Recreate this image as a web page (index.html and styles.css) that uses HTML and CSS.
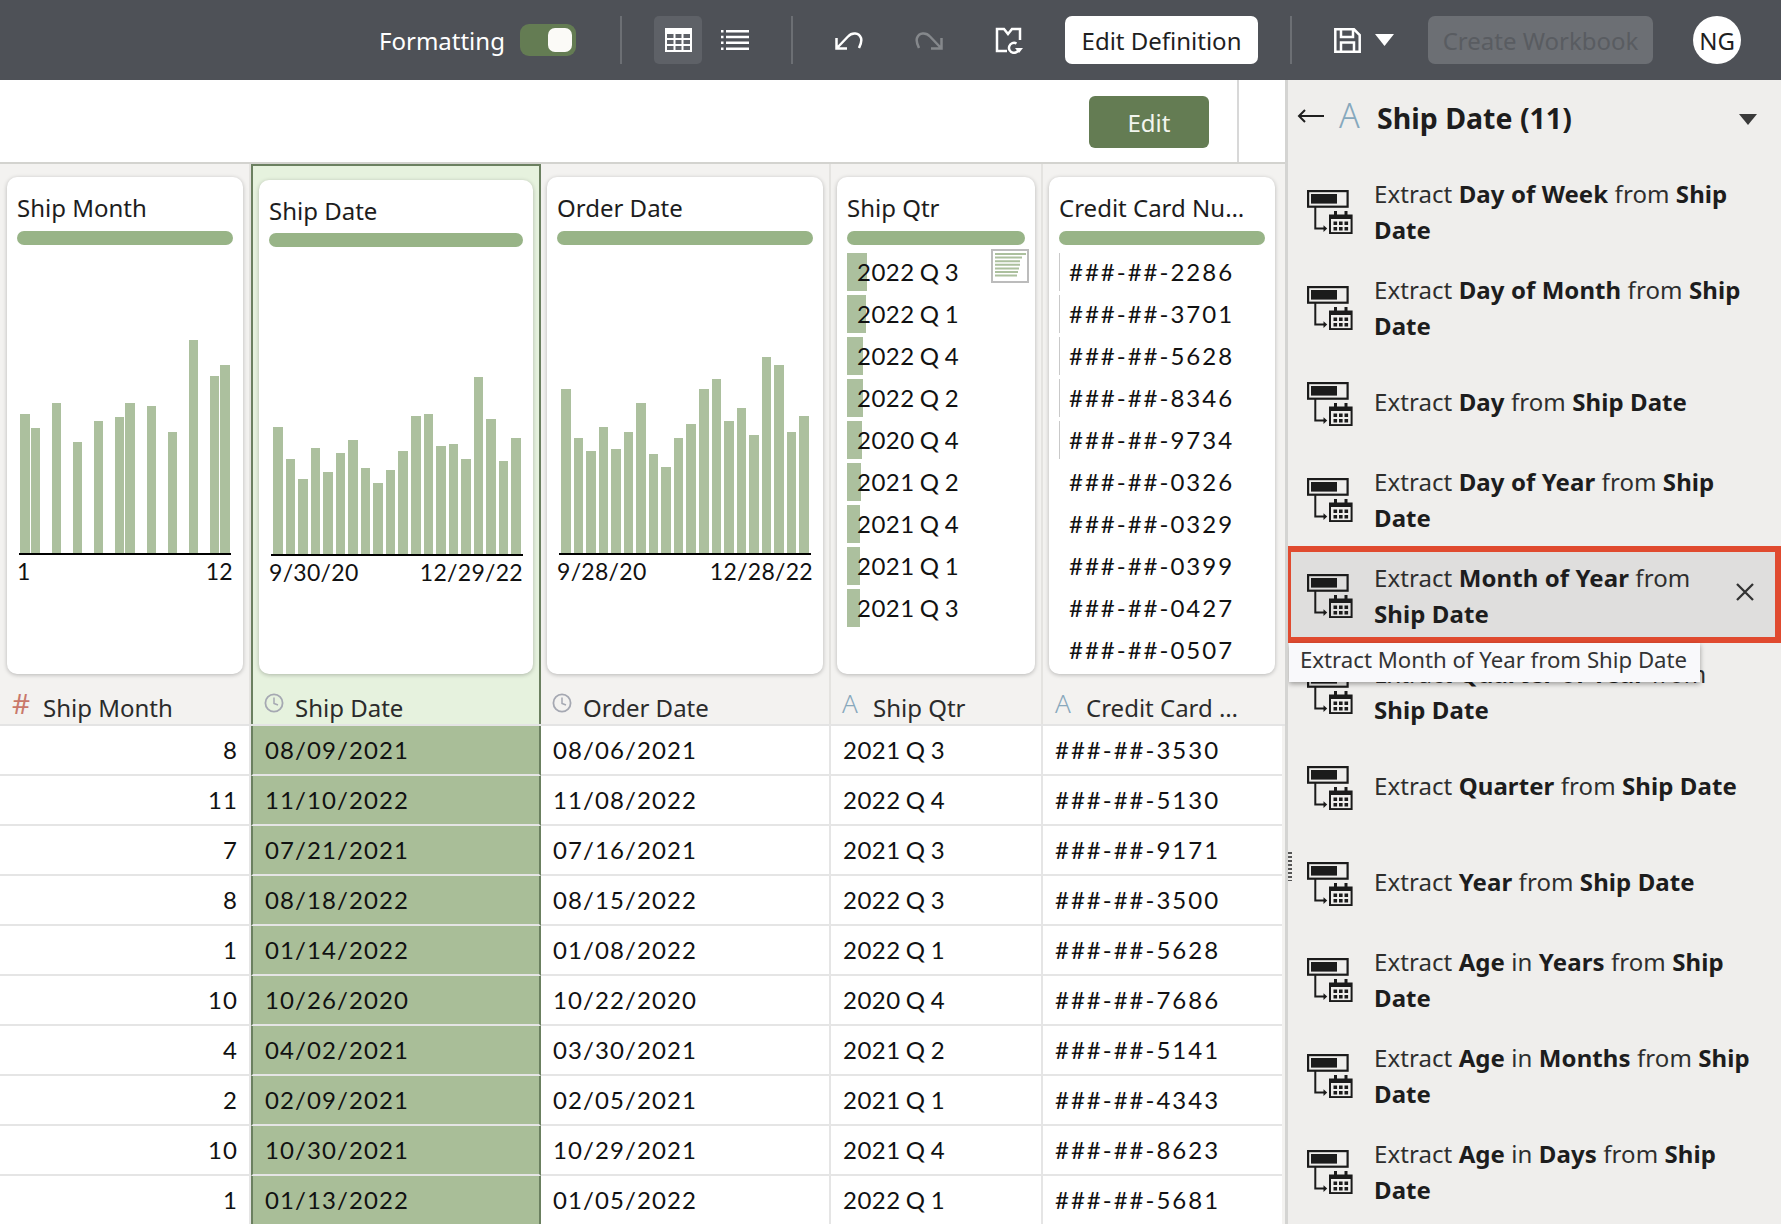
FILE: index.html
```html
<!DOCTYPE html>
<html lang="en">
<head>
<meta charset="utf-8">
<title>Ship Date</title>
<link rel="stylesheet" href="styles.css">
</head>
<body>
<svg class="defs" width="0" height="0" aria-hidden="true">
  <symbol id="extract" viewBox="0 0 46 44">
    <rect x="1.1" y="1.1" width="39.5" height="15.6" fill="none" stroke="#1b1b1b" stroke-width="2.2"/>
    <rect x="4" y="4" width="26" height="9.6" fill="#1b1b1b"/>
    <path d="M8.3 17V38.6H17" fill="none" stroke="#1b1b1b" stroke-width="2"/>
    <path d="M16.5 35.2 20.2 38.6 16.5 42Z" fill="#1b1b1b"/>
    <rect x="23" y="25.5" width="21.6" height="17.6" fill="none" stroke="#1b1b1b" stroke-width="2"/>
    <path d="M23 25h22v4H23zM27 21h3v5h-3zM37.500 21h3v5h-3z" fill="#1b1b1b"/>
    <path d="M26.500 31.500h3.600v3.400h-3.600zM32 31.500h3.600v3.400H32zM37.500 31.500h3.600v3.400h-3.600zM26.500 37h3.600v3.400h-3.600zM32 37h3.600v3.400H32zM37.500 37h3.600v3.400h-3.600z" fill="#1b1b1b"/>
  </symbol>
  <symbol id="clock" viewBox="0 0 20 20">
    <circle cx="10" cy="10" r="8.600" fill="none" stroke="#a5a8b2" stroke-width="1.800"/>
    <path d="M10 4.500V10.500L14 12" fill="none" stroke="#a5a8b2" stroke-width="1.500"/>
  </symbol>
</svg>

<header class="topbar">
  <span class="fmt-label">Formatting</span>
  <span class="toggle"><span class="knob"></span></span>
  <span class="sep sep-a"></span>
  <span class="view-btn">
    <svg width="27" height="24" viewBox="0 0 27 24"><path fill="#fff" fill-rule="evenodd" d="M0 0h27v24H0zM2 6v4h6.500V6zm8.500 0v4h6V6zm8 0v4H25V6zM2 12v4h6.500v-4zm8.500 0v4h6v-4zm8 0v4H25v-4zM2 18v4h6.500v-4zm8.500 0v4h6v-4zm8 0v4H25v-4z"/></svg>
  </span>
  <svg class="list-icon" width="28" height="20" viewBox="0 0 28 20"><path fill="#fff" d="M5 0h23v2.500H5zM5 5.800h23v2.500H5zM5 11.600h23v2.500H5zM5 17.400h23v2.500H5zM0 0h2.500v2.500H0zM0 5.800h2.500v2.500H0zM0 11.600h2.500v2.500H0zM0 17.400h2.500v2.500H0z"/></svg>
  <span class="sep sep-b"></span>
  <svg class="undo" width="28" height="19" viewBox="0 0 28 19"><path fill="none" stroke="#fff" stroke-width="2.500" d="M2 17 13 5.500C17 1 24 1.500 26 7 27 10 26 13 24 17M1.500 7V17.500H12"/></svg>
  <svg class="redo" width="28" height="19" viewBox="0 0 28 19"><path fill="none" stroke="#85888c" stroke-width="2.500" d="M26 17 15 5.500C11 1 4 1.500 2 7 1 10 2 13 4 17M26.500 7V17.500H16"/></svg>
  <svg class="book" width="28" height="27" viewBox="0 0 28 27"><path fill="none" stroke="#fff" stroke-width="2.500" d="M12 24H2V2H9L13 7 17 2H25V13"/><path fill="none" stroke="#fff" stroke-width="2.500" d="M24 21A5 5 0 1 1 21.500 16.500"/><path fill="#fff" d="M20 21h8l-4 5z"/></svg>
  <button class="edit-def" type="button">Edit Definition</button>
  <span class="sep sep-c"></span>
  <svg class="save" width="27" height="25" viewBox="0 0 27 25"><path fill="none" stroke="#fff" stroke-width="2.500" d="M1.300 1.300H20L25.700 7V23.700H1.300ZM7 1.300V9H19V1.300M7 23.700V14.500H20V23.700"/></svg>
  <svg class="save-arrow" width="19" height="12" viewBox="0 0 19 12"><path fill="#fff" d="M0 0h19l-9.500 12z"/></svg>
  <button class="create" type="button" disabled>Create Workbook</button>
  <span class="avatar">NG</span>
</header>

<div class="content">
  <main class="main">
    <div class="subhead">
      <button class="edit" type="button">Edit</button>
      <span class="subhead-rule"></span>
    </div>

    <div class="grid heads">
      <section class="head head-month">
        <div class="card">
          <h3 class="title">Ship Month</h3>
          <div class="pill"></div>
          <div class="chart chart-month">
            <i style="height:139px"></i><i style="height:125px"></i><b></b><i style="height:150px"></i><b></b><i style="height:111px"></i><b></b><i style="height:132px"></i><b></b><i style="height:136px"></i><i style="height:150px"></i><b></b><i style="height:147px"></i><b></b><i style="height:121px"></i><b></b><i style="height:213px"></i><b></b><i style="height:177px"></i><i style="height:188px"></i>
          </div>
          <div class="axis"><span>1</span><span>12</span></div>
        </div>
        <div class="label"><span class="type type-num">#</span>Ship Month</div>
      </section>

      <section class="head head-selected">
        <div class="card">
          <h3 class="title">Ship Date</h3>
          <div class="pill"></div>
          <div class="chart chart-date">
            <i style="height:127px"></i><i style="height:95px"></i><i style="height:75px"></i><i style="height:106px"></i><i style="height:82px"></i><i style="height:101px"></i><i style="height:114px"></i><i style="height:86px"></i><i style="height:71px"></i><i style="height:84px"></i><i style="height:103px"></i><i style="height:138px"></i><i style="height:140px"></i><i style="height:108px"></i><i style="height:110px"></i><i style="height:95px"></i><i style="height:177px"></i><i style="height:135px"></i><i style="height:93px"></i><i style="height:116px"></i>
          </div>
          <div class="axis"><span>9/30/20</span><span>12/29/22</span></div>
        </div>
        <div class="label"><span class="type"><svg width="20" height="20"><use href="#clock"/></svg></span>Ship Date</div>
      </section>

      <section class="head head-order">
        <div class="card">
          <h3 class="title">Order Date</h3>
          <div class="pill"></div>
          <div class="chart chart-order">
            <i style="height:164px"></i><i style="height:115px"></i><i style="height:102px"></i><i style="height:126px"></i><i style="height:104px"></i><i style="height:121px"></i><i style="height:150px"></i><i style="height:99px"></i><i style="height:86px"></i><i style="height:115px"></i><i style="height:129px"></i><i style="height:164px"></i><i style="height:174px"></i><i style="height:132px"></i><i style="height:145px"></i><i style="height:118px"></i><i style="height:196px"></i><i style="height:188px"></i><i style="height:121px"></i><i style="height:137px"></i>
          </div>
          <div class="axis"><span>9/28/20</span><span>12/28/22</span></div>
        </div>
        <div class="label"><span class="type"><svg width="20" height="20"><use href="#clock"/></svg></span>Order Date</div>
      </section>

      <section class="head head-qtr">
        <div class="card">
          <h3 class="title">Ship Qtr</h3>
          <div class="pill"></div>
          <svg class="mini" width="38" height="34" viewBox="0 0 38 34"><rect x="1" y="1" width="36" height="32" fill="#fff" stroke="#bcbcbc" stroke-width="2"/><path fill="#acc09e" d="M4 4h31v2H4zM4 7.600h27v2H4zM4 11.200h25v2H4zM4 14.800h25v2H4zM4 18.400h24v2H4zM4 22h23v2H4zM4 25.600h22v2H4z"/></svg>
          <ul class="values">
            <li class="value"><span class="value-bar" style="width:20px"></span>2022 Q 3</li>
            <li class="value"><span class="value-bar" style="width:19px"></span>2022 Q 1</li>
            <li class="value"><span class="value-bar" style="width:16px"></span>2022 Q 4</li>
            <li class="value"><span class="value-bar" style="width:16px"></span>2022 Q 2</li>
            <li class="value"><span class="value-bar" style="width:15px"></span>2020 Q 4</li>
            <li class="value"><span class="value-bar" style="width:14px"></span>2021 Q 2</li>
            <li class="value"><span class="value-bar" style="width:13px"></span>2021 Q 4</li>
            <li class="value"><span class="value-bar" style="width:13px"></span>2021 Q 1</li>
            <li class="value"><span class="value-bar" style="width:13px"></span>2021 Q 3</li>
          </ul>
        </div>
        <div class="label"><span class="type type-text">A</span>Ship Qtr</div>
      </section>

      <section class="head head-card">
        <div class="card">
          <h3 class="title">Credit Card Nu…</h3>
          <div class="pill"></div>
          <ul class="values">
            <li class="value value-ruled">###-##-2286</li>
            <li class="value value-ruled">###-##-3701</li>
            <li class="value value-ruled">###-##-5628</li>
            <li class="value value-ruled">###-##-8346</li>
            <li class="value value-ruled">###-##-9734</li>
            <li class="value value-plain">###-##-0326</li>
            <li class="value value-plain">###-##-0329</li>
            <li class="value value-plain">###-##-0399</li>
            <li class="value value-plain">###-##-0427</li>
            <li class="value value-plain">###-##-0507</li>
          </ul>
        </div>
        <div class="label"><span class="type type-text">A</span>Credit Card …</div>
      </section>
    </div>

    <div class="grid row"><div class="cell cell-num">8</div><div class="cell cell-sel">08/09/2021</div><div class="cell">08/06/2021</div><div class="cell cell-qtr">2021 Q 3</div><div class="cell cell-card">###-##-3530</div></div>
    <div class="grid row"><div class="cell cell-num">11</div><div class="cell cell-sel">11/10/2022</div><div class="cell">11/08/2022</div><div class="cell cell-qtr">2022 Q 4</div><div class="cell cell-card">###-##-5130</div></div>
    <div class="grid row"><div class="cell cell-num">7</div><div class="cell cell-sel">07/21/2021</div><div class="cell">07/16/2021</div><div class="cell cell-qtr">2021 Q 3</div><div class="cell cell-card">###-##-9171</div></div>
    <div class="grid row"><div class="cell cell-num">8</div><div class="cell cell-sel">08/18/2022</div><div class="cell">08/15/2022</div><div class="cell cell-qtr">2022 Q 3</div><div class="cell cell-card">###-##-3500</div></div>
    <div class="grid row"><div class="cell cell-num">1</div><div class="cell cell-sel">01/14/2022</div><div class="cell">01/08/2022</div><div class="cell cell-qtr">2022 Q 1</div><div class="cell cell-card">###-##-5628</div></div>
    <div class="grid row"><div class="cell cell-num">10</div><div class="cell cell-sel">10/26/2020</div><div class="cell">10/22/2020</div><div class="cell cell-qtr">2020 Q 4</div><div class="cell cell-card">###-##-7686</div></div>
    <div class="grid row"><div class="cell cell-num">4</div><div class="cell cell-sel">04/02/2021</div><div class="cell">03/30/2021</div><div class="cell cell-qtr">2021 Q 2</div><div class="cell cell-card">###-##-5141</div></div>
    <div class="grid row"><div class="cell cell-num">2</div><div class="cell cell-sel">02/09/2021</div><div class="cell">02/05/2021</div><div class="cell cell-qtr">2021 Q 1</div><div class="cell cell-card">###-##-4343</div></div>
    <div class="grid row"><div class="cell cell-num">10</div><div class="cell cell-sel">10/30/2021</div><div class="cell">10/29/2021</div><div class="cell cell-qtr">2021 Q 4</div><div class="cell cell-card">###-##-8623</div></div>
    <div class="grid row"><div class="cell cell-num">1</div><div class="cell cell-sel">01/13/2022</div><div class="cell">01/05/2022</div><div class="cell cell-qtr">2022 Q 1</div><div class="cell cell-card">###-##-5681</div></div>
  </main>

  <aside class="panel">
    <span class="handle"></span>
    <div class="panel-head">
      <svg class="back" width="27" height="14" viewBox="0 0 27 14"><path fill="none" stroke="#1f1f1f" stroke-width="2" d="M27 7H2M8 1 2 7l6 6"/></svg>
      <span class="panel-type">A</span>
      <h2 class="panel-title">Ship Date (11)</h2>
      <svg class="panel-caret" width="18" height="11" viewBox="0 0 18 11"><path fill="#3a3a3a" d="M0 0h18l-9 11z"/></svg>
    </div>
    <ul class="items">
      <li class="item"><svg class="item-icon" width="46" height="44"><use href="#extract"/></svg><p class="item-text">Extract <b>Day of Week</b> from <b>Ship</b> <b>Date</b></p></li>
      <li class="item"><svg class="item-icon" width="46" height="44"><use href="#extract"/></svg><p class="item-text">Extract <b>Day of Month</b> from <b>Ship</b> <b>Date</b></p></li>
      <li class="item"><svg class="item-icon" width="46" height="44"><use href="#extract"/></svg><p class="item-text item-single">Extract <b>Day</b> from <b>Ship Date</b></p></li>
      <li class="item"><svg class="item-icon" width="46" height="44"><use href="#extract"/></svg><p class="item-text">Extract <b>Day of Year</b> from <b>Ship</b> <b>Date</b></p></li>
      <li class="item item-active"><svg class="item-icon" width="46" height="44"><use href="#extract"/></svg><p class="item-text">Extract <b>Month of Year</b> from <b>Ship Date</b></p><svg class="item-close" width="18" height="18" viewBox="0 0 18 18"><path fill="none" stroke="#333" stroke-width="2.300" d="M1 1 17 17M17 1 1 17"/></svg></li>
      <li class="item"><svg class="item-icon" width="46" height="44"><use href="#extract"/></svg><p class="item-text">Extract <b>Quarter of Year</b> from <b>Ship Date</b></p></li>
      <li class="item"><svg class="item-icon" width="46" height="44"><use href="#extract"/></svg><p class="item-text item-single">Extract <b>Quarter</b> from <b>Ship Date</b></p></li>
      <li class="item"><svg class="item-icon" width="46" height="44"><use href="#extract"/></svg><p class="item-text item-single">Extract <b>Year</b> from <b>Ship Date</b></p></li>
      <li class="item"><svg class="item-icon" width="46" height="44"><use href="#extract"/></svg><p class="item-text">Extract <b>Age</b> in <b>Years</b> from <b>Ship</b> <b>Date</b></p></li>
      <li class="item"><svg class="item-icon" width="46" height="44"><use href="#extract"/></svg><p class="item-text">Extract <b>Age</b> in <b>Months</b> from <b>Ship</b> <b>Date</b></p></li>
      <li class="item"><svg class="item-icon" width="46" height="44"><use href="#extract"/></svg><p class="item-text">Extract <b>Age</b> in <b>Days</b> from <b>Ship</b> <b>Date</b></p></li>
    </ul>
    <div class="tooltip">Extract Month of Year from Ship Date</div>
  </aside>
</div>
</body>
</html>
```

FILE: styles.css
```css
* { box-sizing: border-box; }
html, body { margin: 0; height: 100%; }
body {
  width: 1781px;
  height: 1224px;
  overflow: hidden;
  background: #fff;
  color: #1d1d1d;
  font-family: "Noto Sans", sans-serif;
  font-size: 24px;
}
.defs { position: absolute; }
ul { list-style: none; margin: 0; padding: 0; }
h2, h3, p { margin: 0; font-weight: 400; }
button { font: inherit; border: 0; padding: 0; }

/* top bar */
.topbar {
  height: 80px;
  background: #4e5157;
  display: flex;
  align-items: center;
  padding-left: 379px;
  color: #fff;
}
.fmt-label { width: 125px; white-space: nowrap; }
.toggle {
  width: 56px; height: 32px; margin-left: 16px;
  background: #647c53; border-radius: 9px;
  display: flex; align-items: center; justify-content: flex-end; padding-right: 4px;
}
.knob { width: 24px; height: 24px; border-radius: 7px; background: #fbfaf7; }
.sep { width: 2px; height: 48px; background: #6c6f74; flex: none; }
.sep-a { margin-left: 44px; }
.view-btn {
  width: 48px; height: 48px; margin-left: 32px;
  background: #5e6167; border-radius: 5px;
  display: flex; align-items: center; justify-content: center;
}
.list-icon { margin-left: 19px; }
.sep-b { margin-left: 42px; }
.undo { margin-left: 42px; }
.redo { margin-left: 52px; }
.book { margin-left: 52px; }
.edit-def {
  width: 193px; height: 48px; margin-left: 42px;
  background: #fff; color: #1f1f1f; border-radius: 7px;
}
.sep-c { margin-left: 32px; }
.save { margin-left: 42px; }
.save-arrow { margin-left: 14px; }
.create {
  width: 225px; height: 48px; margin-left: 34px;
  background: #6c6f74; color: #595c61; border-radius: 7px;
}
.avatar {
  width: 48px; height: 48px; margin-left: 40px;
  border-radius: 50%; background: #fff; color: #1f1f1f;
  display: flex; align-items: center; justify-content: center;
}

/* layout */
.content { display: flex; height: 1144px; }
.main { width: 1285px; background: #f3f2f0; flex: none; overflow: hidden; }
.subhead {
  height: 84px; background: #fff;
  border-bottom: 2px solid #d3d3cf;
  display: flex; justify-content: flex-end;
}
.edit {
  width: 120px; height: 52px; margin-top: 16px;
  background: #647c53; color: #f2f5ee; border-radius: 6px;
}
.subhead-rule { width: 2px; height: 82px; margin: 0 46px 0 28px; background: #d8d8d8; }

.grid { display: grid; grid-template-columns: 251px 290px 290px 212px 239px; }

/* column profile heads */
.heads { height: 562px; border-bottom: 2px solid #e4e4e4; }
.head {
  --pl: 6px;
  display: flex; flex-direction: column;
  border-right: 2px solid #e4e3e0;
  padding: 13px 6px 0 var(--pl);
}
.head-month { --pl: 7px; }
.head-card { padding-right: 7px; border-right: 0; }
.head-selected {
  background: #e6f2de;
  border: 2px solid #6b8060;
  border-bottom: 0;
  padding: 14px 6px 0 var(--pl);
}
.card {
  position: relative;
  height: 497px; flex: none;
  background: #fff; border-radius: 10px;
  box-shadow: 0 1px 4px rgba(0, 0, 0, .25);
  padding: 13px 10px 0;
  overflow: hidden;
}
.head-selected .card { height: 494px; }
.title { height: 36px; line-height: 36px; margin-bottom: 5px; white-space: nowrap; font-size: 24px; color: #1d1d1d; }
.head-selected .title { margin-bottom: 4px; }
.pill { height: 14px; border-radius: 7px; background: #98b487; }
.chart {
  height: 310px; margin: 0 0 0 2px;
  display: flex; align-items: flex-end;
  border-bottom: 2px solid #000;
}
.chart i, .chart b { flex: 1; display: block; background: #acc09e; }
.chart b { background: none; }
.chart-month { gap: 1px; margin-right: 2px; padding: 0 1px; }
.chart-date { gap: 3px; padding: 0 2px; height: 309px; }
.chart-order { gap: 3px; margin-right: 2px; padding: 0 2px; }
.axis {
  display: flex; justify-content: space-between;
  height: 33px; line-height: 33px;
  font-family: Lato, sans-serif; font-size: 23px; letter-spacing: .3px;
  color: #111;
}
.mini { position: absolute; right: 6px; top: 72px; }
.values { margin-top: 8px; display: flex; flex-direction: column; gap: 4px; }
.value {
  position: relative;
  isolation: isolate;
  height: 38px; line-height: 38px;
  padding-left: 10px;
  font-family: Lato, sans-serif; letter-spacing: .5px; word-spacing: -1.500px; color: #111;
  white-space: nowrap;
}
.value-bar { position: absolute; left: 0; top: 0; bottom: 0; background: #acc09e; z-index: -1; }
.value-ruled, .value-plain { border-left: 1px solid #c9c9c9; padding-left: 9px; letter-spacing: 2px; }
.value-plain { border-left-color: transparent; }

.label {
  flex: 1; display: flex; align-items: center;
  margin-left: calc(-1 * var(--pl)); padding: 17px 0 0 11px;
  color: #2b2b2b; white-space: nowrap;
}
.head-month .label { padding-left: 12px; }
.head-card .label { padding-left: 12px; }
.type { width: 31px; flex: none; display: flex; align-items: center; height: 26px; margin-top: -10px; }
.type-num { color: #c9796b; font-size: 28px; }
.type-text { color: #88a8bc; font-size: 26px; font-weight: 300; }

/* table */
.row { height: 50px; }
.cell {
  background: #fff;
  height: 50px; line-height: 48px;
  padding-left: 12px;
  border-bottom: 2px solid #e5e5e5;
  border-right: 2px solid #e5e5e5;
  font-family: Lato, sans-serif; letter-spacing: 1.100px; color: #111;
  white-space: nowrap;
}
.cell-num { text-align: right; padding: 0 11px 0 0; }
.cell-qtr { letter-spacing: .5px; word-spacing: -1.500px; padding-left: 12px; }
.cell-card { letter-spacing: 2px; border-right: 0; }
.cell-sel {
  background: #a9be98;
  border-left: 2px solid #6b8060;
  border-right: 2px solid #6b8060;
}

/* side panel */
.panel {
  position: relative;
  width: 496px; flex: none;
  background: #efeeec;
  border-left: 3px solid #d4d4d2;
  overflow: hidden;
}
.handle {
  position: absolute; left: 0; top: 772px;
  width: 4px; height: 29px;
  background: repeating-linear-gradient(#555 0 2px, transparent 2px 4px);
}
.panel-head { height: 84px; display: flex; align-items: center; padding: 0 0 8px 9px; }
.panel-type { width: 38px; margin-left: 15px; font-size: 34px; line-height: 40px; font-weight: 300; color: #86a8bd; margin-top: -6px; }
.panel-title { font-size: 28.500px; font-weight: 700; color: #1d1d1d; white-space: nowrap; }
.panel-caret { margin-left: auto; margin-right: 24px; margin-top: 2px; }
.back { margin-top: -4px; }
.item { height: 96px; display: flex; align-items: center; padding-left: 19px; }
.item-icon { flex: none; }
.item-text { width: 382px; margin-left: 21px; line-height: 36px; letter-spacing: .08px; color: #2e2e2e; }
.item-text b { color: #1d1d1d; }
.item-single { margin-bottom: 4px; }
.item-active {
  height: 97px;
  margin: -2px 0 1px -3px;
  padding: 3px 0 0 22px;
  background: #dfdedd;
  outline: 6px solid #e04a2f;
  outline-offset: -6px;
}
.item-active .item-text { width: 340px; flex: none; }
.item-close { margin: 0 0 9px 22px; flex: none; }
.tooltip {
  position: absolute; left: 1px; top: 563px;
  width: 411px; height: 39px; line-height: 33px;
  padding-left: 11px;
  background: #f9f9fb;
  box-shadow: 0 2px 5px rgba(0, 0, 0, .35);
  font-size: 22.200px; color: #333;
  white-space: nowrap;
}
```
